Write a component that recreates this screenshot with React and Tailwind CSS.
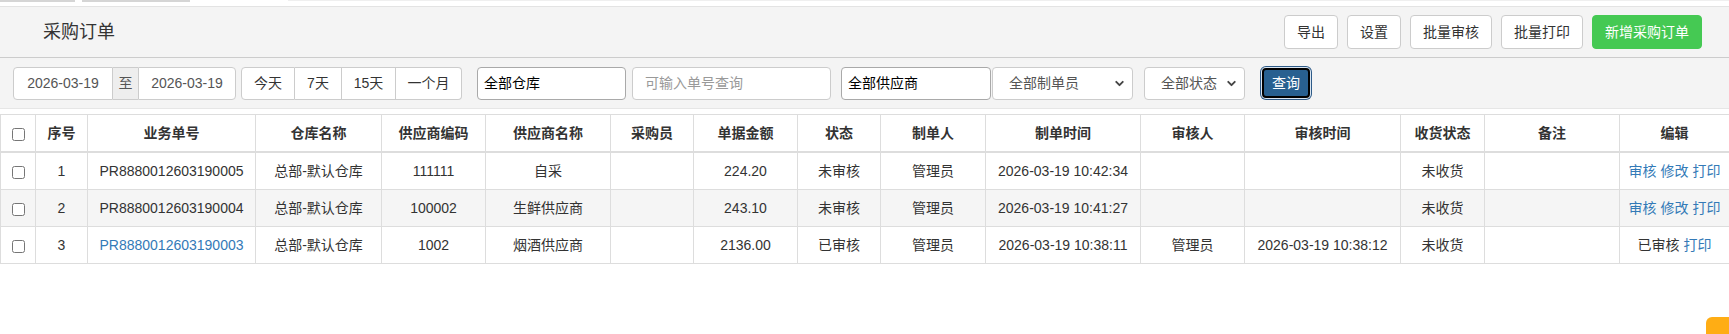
import { ChevronDown } from 'lucide-react';

const font = { fontFamily: '"Liberation Sans", "Noto Sans CJK SC", Arial, sans-serif' };

const cols = [35, 52, 168, 126, 104, 125, 83, 104, 83, 105, 155, 104, 156, 84, 135, 110];
const heads = ['序号', '业务单号', '仓库名称', '供应商编码', '供应商名称', '采购员', '单据金额', '状态', '制单人', '制单时间', '审核人', '审核时间', '收货状态', '备注', '编辑'];

const rows = [
  { no: 1, code: 'PR8880012603190005', wh: '总部-默认仓库', sc: '111111', sn: '自采', amt: '224.20', st: '未审核', maker: '管理员', mt: '2026-03-19 10:42:34', aud: '', at: '', rs: '未收货', done: false },
  { no: 2, code: 'PR8880012603190004', wh: '总部-默认仓库', sc: '100002', sn: '生鲜供应商', amt: '243.10', st: '未审核', maker: '管理员', mt: '2026-03-19 10:41:27', aud: '', at: '', rs: '未收货', done: false },
  { no: 3, code: 'PR8880012603190003', wh: '总部-默认仓库', sc: '1002', sn: '烟酒供应商', amt: '2136.00', st: '已审核', maker: '管理员', mt: '2026-03-19 10:38:11', aud: '管理员', at: '2026-03-19 10:38:12', rs: '未收货', done: true },
];

function HeadButton({ children, green = false }) {
  return (
    <button
      className={`h-[34px] px-3 rounded text-sm border ${
        green ? 'bg-[#45c953] border-[#45c953] text-white' : 'bg-white border-[#ccc] text-[#333]'
      }`}
    >
      {children}
    </button>
  );
}

function Select({ label, width }) {
  return (
    <div className={`h-[33px] ${width} bg-white border border-[#ccc] rounded flex items-center justify-between pl-[16px] pr-[6px] text-sm text-[#555]`}>
      <span>{label}</span>
      <ChevronDown size={13} strokeWidth={3.5} className="text-[#444]" />
    </div>
  );
}

export default function App() {
  return (
    <div className="w-[1729px] h-[334px] bg-white relative overflow-hidden text-[#333]" style={font}>
      {/* remnant tab strip */}
      <div className="h-[6px] relative">
        <div className="absolute left-0 top-0 w-[75px] h-[2px] bg-[#d5d5d5]" />
        <div className="absolute left-[82px] top-0 w-[108px] h-[2px] bg-[#d5d5d5]" />
        <div className="absolute left-[288px] top-0 right-0 h-[1px] bg-[#efefef]" />
      </div>
      <div className="border-t border-[#e3e3e3]" />

      {/* header */}
      <div className="h-[51px] bg-[#f4f4f4] border-b border-[#ccc] flex items-center justify-between pl-[43px] pr-[27px]">
        <div className="text-[18px] text-[#333]">采购订单</div>
        <div className="flex gap-[9px]">
          <HeadButton>导出</HeadButton>
          <HeadButton>设置</HeadButton>
          <HeadButton>批量审核</HeadButton>
          <HeadButton>批量打印</HeadButton>
          <HeadButton green>新增采购订单</HeadButton>
        </div>
      </div>

      {/* filters */}
      <div className="h-[51px] bg-[#f4f4f4] border-b border-[#e6e6e6] flex items-center pl-[13px] text-sm">
        <div className="flex h-[33px] w-[223px]">
          <div className="w-[100px] bg-white border border-[#ccc] rounded-l flex items-center justify-center text-[#555]">2026-03-19</div>
          <div className="w-[25px] bg-[#eee] border-y border-[#ccc] flex items-center justify-center text-[#555]">至</div>
          <div className="flex-1 bg-white border border-[#ccc] rounded-r flex items-center justify-center text-[#555]">2026-03-19</div>
        </div>
        <div className="ml-[5px] flex h-[33px]">
          <button className="w-[54px] bg-white border border-[#ccc] rounded-l">今天</button>
          <button className="w-[47px] bg-white border-y border-r border-[#ccc]">7天</button>
          <button className="w-[54px] bg-white border-y border-r border-[#ccc]">15天</button>
          <button className="w-[66px] bg-white border-y border-r border-[#ccc] rounded-r">一个月</button>
        </div>
        <div className="ml-[15px] w-[149px] h-[33px] bg-white border border-[#a9a9a9] rounded flex items-center pl-[6px] text-black">全部仓库</div>
        <div className="ml-[6px] w-[199px] h-[33px] bg-white border border-[#ccc] rounded flex items-center pl-[12px] text-[#999]">可输入单号查询</div>
        <div className="ml-[10px] w-[150px] h-[33px] bg-white border border-[#a9a9a9] rounded flex items-center pl-[6px] text-black">全部供应商</div>
        <div className="ml-[1px]">
          <Select label="全部制单员" width="w-[141px]" />
        </div>
        <div className="ml-[11px]">
          <Select label="全部状态" width="w-[101px]" />
        </div>
        <button className="ml-[17px] h-[30px] px-2 border-2 border-black rounded bg-[#286090] text-white shadow-[0_0_0_1px_#dbe6f1,0_0_0_2px_#2e5b88]">
          查询
        </button>
      </div>

      {/* table */}
      <div className="pt-[5px]">
        <table className="w-[1729px] table-fixed border-collapse text-sm">
          <colgroup>
            {cols.map((w, i) => (
              <col key={i} style={{ width: w }} />
            ))}
          </colgroup>
          <thead>
            <tr>
              <th className="border border-[#ddd] border-b-2 h-[37px] text-center align-middle">
                <input type="checkbox" className="align-middle" />
              </th>
              {heads.map((h) => (
                <th key={h} className="border border-[#ddd] border-b-2 px-2 py-2 leading-5 font-bold text-center align-bottom">
                  {h}
                </th>
              ))}
            </tr>
          </thead>
          <tbody>
            {rows.map((r) => {
              const cells = [r.no, r.code, r.wh, r.sc, r.sn, '', r.amt, r.st, r.maker, r.mt, r.aud, r.at, r.rs, ''];
              return (
                <tr key={r.no} className={r.no === 2 ? 'bg-[#f5f5f5]' : 'bg-white'}>
                  <td className="border border-[#ddd] h-[37px] text-center align-middle">
                    <input type="checkbox" className="align-middle" />
                  </td>
                  {cells.map((c, i) => (
                    <td
                      key={i}
                      className={`border border-[#ddd] px-2 py-2 leading-5 text-center whitespace-nowrap ${
                        i === 1 && r.done ? 'text-[#337ab7]' : ''
                      }`}
                    >
                      {c}
                    </td>
                  ))}
                  <td className="border border-[#ddd] px-2 py-2 leading-5 text-center whitespace-nowrap">
                    {r.done ? (
                      <>
                        已审核 <span className="text-[#337ab7]">打印</span>
                      </>
                    ) : (
                      <span className="text-[#337ab7]">审核 修改 打印</span>
                    )}
                  </td>
                </tr>
              );
            })}
          </tbody>
        </table>
      </div>

      {/* floating corner button */}
      <div className="absolute right-0 bottom-0 w-[23px] h-[17px] bg-[#ffad14] rounded-tl-md" />
    </div>
  );
}
